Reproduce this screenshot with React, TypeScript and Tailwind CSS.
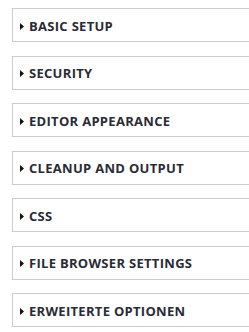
const sections = [
  "Basic setup",
  "Security",
  "Editor appearance",
  "Cleanup and output",
  "CSS",
  "File browser settings",
  "Erweiterte Optionen",
];

export default function App() {
  return (
    <div className="w-[249px] h-[332px] overflow-hidden bg-white pt-[8px] pl-[12px]">
      <div className="flex flex-col gap-[13.5px] w-[260px]">
        {sections.map((s) => (
          <div
            key={s}
            className="h-[34px] border border-[#cccccc] flex items-center pl-[7px] pt-[2px]"
          >
            <svg width="4" height="7" viewBox="0 0 4 7" className="mr-[5px]">
              <path d="M0 0 L4 3.5 L0 7 Z" fill="#111" />
            </svg>
            <span
              className="uppercase font-bold text-[13px] leading-none tracking-[0.3px] text-[#2b2b35]"
              style={{ fontFamily: '"Open Sans", sans-serif' }}
            >
              {s}
            </span>
          </div>
        ))}
      </div>
    </div>
  );
}
